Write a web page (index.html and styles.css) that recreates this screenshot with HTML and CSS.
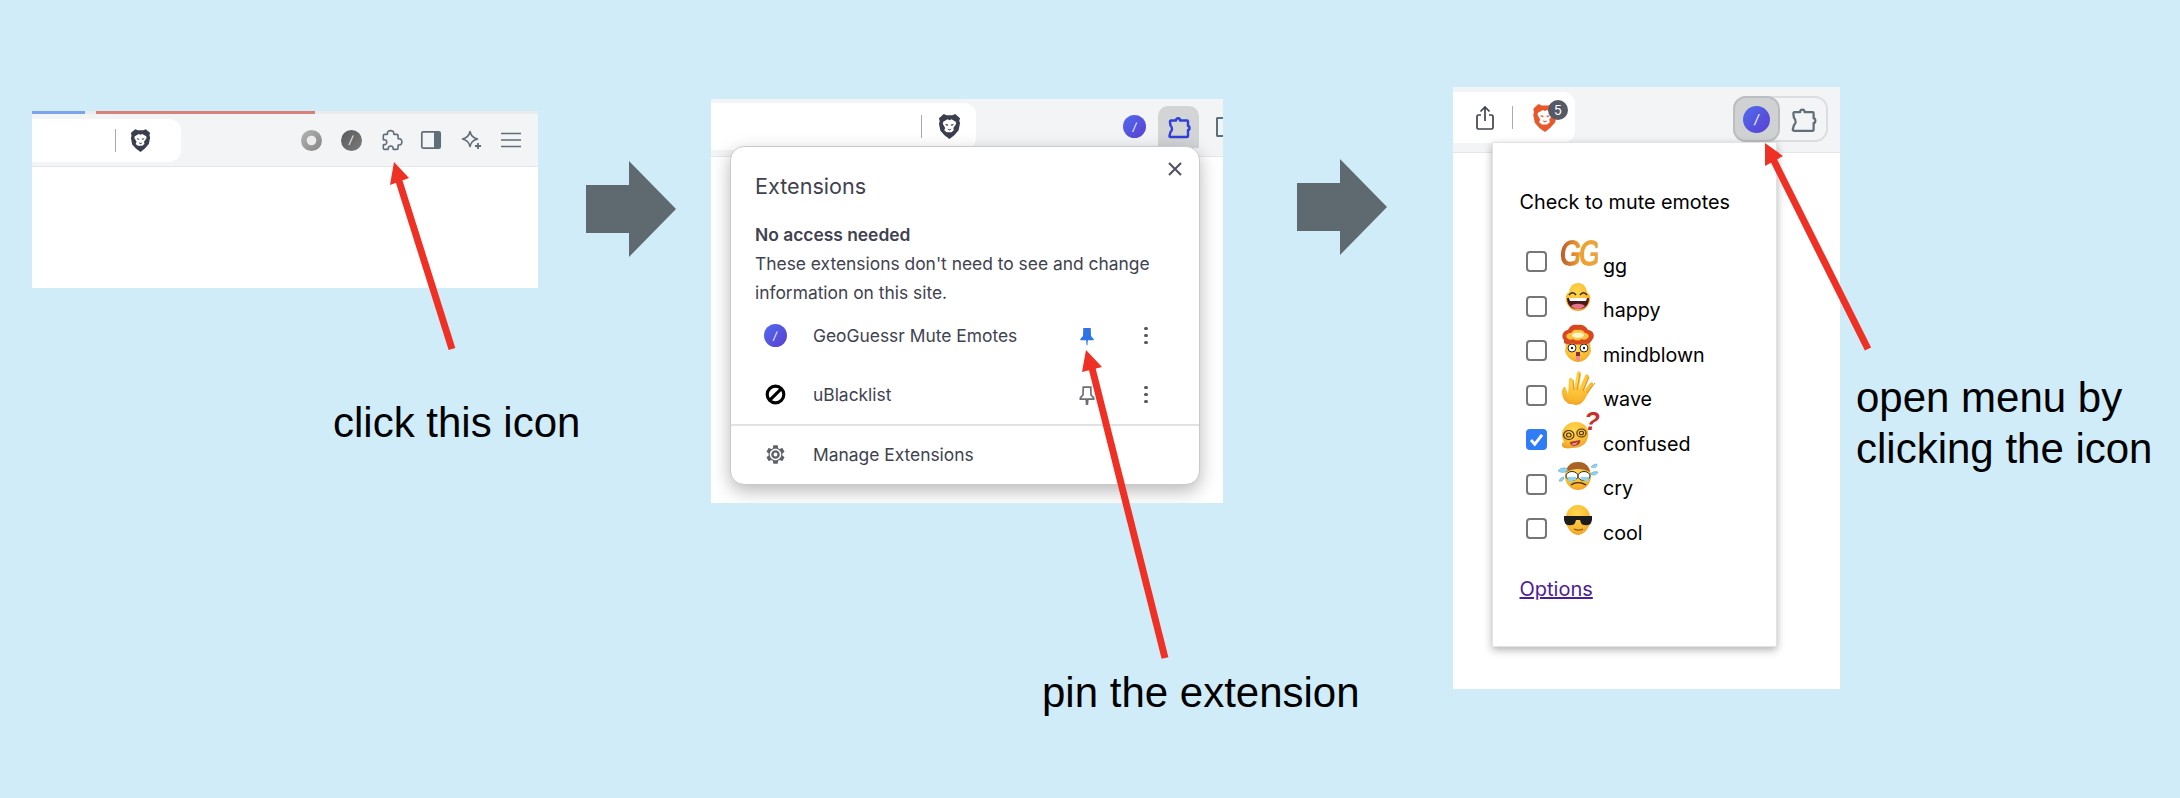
FILE: index.html
```html
<!DOCTYPE html>
<html lang="en">
<head>
<meta charset="utf-8">
<title>Pin the extension</title>
<link rel="stylesheet" href="styles.css">
</head>
<body>
<svg class="defs" width="0" height="0" aria-hidden="true">
  <defs>
    <linearGradient id="grey" x1="0" y1="0" x2="1" y2="1"><stop offset="0" stop-color="#b4b4b4"/><stop offset="1" stop-color="#858585"/></linearGradient>
    <radialGradient id="skin" cx=".45" cy=".3" r=".8"><stop offset="0" stop-color="#ffd84f"/><stop offset=".7" stop-color="#f9b52c"/><stop offset="1" stop-color="#e8962a"/></radialGradient>
    <symbol id="lion" viewBox="0 0 24 28">
      <path class="lion-shield" d="M6 1l3 1.300h6L18 1l3.500 3 1.500 1.500-.8 2.500.8 2.500-1.500 7.500-4.500 5L12 27l-5-3.500-4.500-5L1 11l.8-2.500L1 5.500 2.500 4z"/>
      <path class="lion-face" d="M5.500 9l4.500-2.500 2 1 2-1L18.500 9l.5 2-3 4.500.5 2.500-2.500 2h-5L6.500 18l1-2.500L5 11z"/>
      <path class="lion-shield" d="M7.500 11.500l3 .5v1.200l-2-.3zM16.500 11.500l-3 .5v1.200l2-.3zM10 16l2 1 2-1-.7 1.500-1.300.7-1.300-.7z"/>
    </symbol>
    <symbol id="puzzle" viewBox="0 0 24 24">
      <path d="M8.500 5.500c-.8-3.800 7-3.800 6.200 0-.1.600 0 .9.600.9h2.400c.9 0 1.400.5 1.400 1.400v2.400c0 .6.300.7.900.6 3.800-.8 3.800 7 0 6.200-.6-.1-.9 0-.9.600v2.400c0 .9-.5 1.400-1.400 1.400h-3c-.6 0-.7-.3-.6-.9.500-3.400-5.300-3.400-4.800 0 .1.600 0 .9-.6.900H5.700c-.9 0-1.400-.5-1.400-1.400v-2.800c0-.6.300-.7.900-.6 3.400.5 3.400-5.300 0-4.800-.6.100-.9 0-.9-.6V7.800c0-.9.500-1.400 1.400-1.400h2.200c.6 0 .7-.3.600-.9z"/>
    </symbol>
    <symbol id="puzzle-pin" viewBox="0 0 24 24">
      <path stroke-linejoin="round" d="M4 5.500H9C9 2.500 13 2.500 13 5.500H20c.6 0 1 .4 1 1V11C23 11 23 15 21 15V21c0 .6-.4 1-1 1H3.500c-.8 0-1.200-.5-1-1.200L3.500 17C5.500 15.500 5.500 12.500 3.500 10.500L3 7c-.1-.8.300-1.500 1-1.500z"/>
    </symbol>
    <symbol id="pin" viewBox="0 0 24 24">
      <path d="M7.500 2.500h9l.3 9.500 3.200 3.500v1.500H13l-.5 6h-1L11 17H4v-1.500L7.200 12z"/>
    </symbol>
    <symbol id="gear" viewBox="0 0 24 24">
      <path fill-rule="evenodd" d="M19.140 12.940c.04-.3.06-.61.06-.94 0-.32-.02-.64-.07-.94l2.030-1.580c.18-.14.23-.41.12-.61l-1.920-3.320c-.12-.22-.37-.29-.59-.22l-2.390.96c-.5-.38-1.030-.7-1.620-.94l-.36-2.540c-.04-.24-.24-.41-.48-.41h-3.840c-.24 0-.43.17-.47.41l-.36 2.540c-.59.24-1.130.57-1.620.94l-2.390-.96c-.22-.08-.47 0-.59.22L2.740 8.870c-.12.21-.08.47.12.61l2.030 1.580c-.05.3-.09.63-.09.94s.02.64.07.94l-2.030 1.580c-.18.14-.23.41-.12.61l1.920 3.320c.12.22.37.29.59.22l2.390-.96c.5.38 1.030.7 1.620.94l.36 2.540c.05.24.24.41.48.41h3.840c.24 0 .44-.17.47-.41l.36-2.540c.59-.24 1.130-.56 1.620-.94l2.390.96c.22.08.47 0 .59-.22l1.920-3.320c.12-.22.07-.47-.12-.61l-2.010-1.580zM12 18c-3.300 0-6-2.700-6-6s2.700-6 6-6 6 2.700 6 6-2.700 6-6 6z"/>
      <path fill-rule="evenodd" d="M12 7.500a4.500 4.500 0 1 0 0 9 4.500 4.500 0 0 0 0-9zm0 2.500a2 2 0 1 1 0 4 2 2 0 0 1 0-4z"/>
    </symbol>
    <symbol id="happy" viewBox="0 0 40 40">
      <path fill="url(#skin)" d="M20 5c6 0 8 4 9 9 3 2 4 5 3 9-2 7-7 10-12 10S10 30 8 23c-1-4 0-7 3-9 1-5 3-9 9-9z"/>
      <path d="M11 17c2-3 5-3 7 0M22 17c2-3 5-3 7 0" fill="none" stroke="#3a2a1a" stroke-width="1.400"/>
      <path fill="#4a1a1a" d="M9 20h22c0 8-5 11-11 11S9 28 9 20z"/>
      <path fill="#fff" d="M11 20h18l-1 3H12z"/>
      <path fill="#e8728a" d="M13 28c3-3 11-3 14 0-2 2-4 3-7 3s-5-1-7-3z"/>
    </symbol>
    <symbol id="mindblown" viewBox="0 0 40 40">
      <path fill="url(#skin)" d="M8 20h24l1 8c-2 7-8 11-13 11S9 35 7 28z"/>
      <path fill="#d8471f" d="M6 17C2 13 6 7 10 7c2-5 6-6 10-5 4-1 8 1 10 5 5 0 8 6 4 10-2 4-6 5-8 3-3 2-9 2-12 0-3 2-6 1-8 0z"/>
      <path fill="#f9c23c" d="M9 15c-2-3 1-5 4-5 2-3 4-4 7-3 3-1 6 1 7 3 3 0 5 3 3 5-2 2-5 2-6 1-3 2-6 2-9 0-2 1-4 1-6-1z"/>
      <path fill="#fff4c8" d="M14 12c1-2 4-3 6-2 3-1 5 0 6 2 0 2-3 3-6 3s-6-1-6-3z"/>
      <circle cx="14" cy="25" r="4" fill="#fff" stroke="#2a2a2a"/><circle cx="26" cy="25" r="4" fill="#fff" stroke="#2a2a2a"/>
      <circle cx="14" cy="25" r="1.200" fill="#222"/><circle cx="26" cy="25" r="1.200" fill="#222"/>
      <path fill="#8a2f3a" d="M18 29h4v4h-4z"/><path fill="#f08a9a" d="M18 33h4v3c0 2-4 2-4 0z"/>
    </symbol>
    <symbol id="wave" viewBox="0 0 40 40">
      <path fill="url(#skin)" d="M11 37C6 34 4 30 4 24l1-3c1-2 3-1 3 1l2 5 1-14c0-3 3-3 4 0l1 9 3-16c1-3 4-2 4 1l-2 15 6-13c1-3 4-2 4 1l-5 14 6-8c2-2 4 0 3 2l-7 12c-3 6-8 10-14 7z"/>
      <path fill="none" stroke="#e08d1c" stroke-width="1" d="M15 13l1 10M22 7l-3 16M31 10l-6 14M37 16l-8 10"/>
    </symbol>
    <symbol id="confused" viewBox="0 0 40 40">
      <g transform="translate(-3 5) scale(1.150 1)">
        <path fill="url(#skin)" d="M18 5c7 0 11 5 11 12 0 3-1 6-2 8-3 5-8 6-13 6-4 1-8 0-8-3 0-2 1-3 2-3-1-2-2-4-2-7 0-7 5-13 12-13z"/>
        <g fill="none" stroke="#4a3318" stroke-width="1">
          <circle cx="12" cy="18" r="4.500"/><circle cx="12" cy="18" r="2"/>
          <circle cx="23" cy="16" r="4"/><circle cx="23" cy="16" r="1.800"/>
        </g>
        <path fill="#a53a3a" d="M13 25l9-2c0 4-2 5-5 6-2 0-4-1-4-4z"/><path fill="#f08fa0" d="M14 27l6-2c-1 2-2 3-3 3s-2 0-3-1z"/>
      </g>
    </symbol>
    <symbol id="cry" viewBox="0 0 40 40">
      <path fill="url(#skin)" d="M20 6c8 0 13 6 13 14s-6 14-13 14S7 28 7 20 12 6 20 6z"/>
      <path fill="#a9622a" d="M8 16C9 9 14 6 20 6s11 3 12 10c-7-4-17-4-24 0z"/>
      <ellipse cx="14" cy="20" rx="6" ry="4.500" fill="#fff" stroke="#2a2a2a"/><ellipse cx="26" cy="20" rx="6" ry="4.500" fill="#fff" stroke="#2a2a2a"/>
      <path fill="#8fd3ee" d="M9 21h9v3l-7 2zM22 21h9l-1 5-6-2z"/>
      <path d="M13 29c4-3 10-3 15 0" fill="none" stroke="#3a2a1a" stroke-width="1.400"/>
      <path fill="#8fd3ee" stroke="#4f9fc9" stroke-width=".5" d="M0 15c3-4 8-4 10-1-2 3-7 3-10 1zM1 25c1-3 3-4 5-4 0 3-2 5-5 4zM33 11c1-2 4-3 6-3 0 3-2 5-6 3zM32 18c2-2 5-3 8-2-1 3-5 4-8 2z"/>
    </symbol>
    <symbol id="cool" viewBox="0 0 40 40">
      <path fill="url(#skin)" d="M20 4c7 0 11 5 12 11 1 4 0 8-1 10-2 5-7 9-11 9s-9-4-11-9c-1-2-2-6-1-10C9 9 13 4 20 4z"/>
      <path fill="#1c1c1c" d="M6 15h28v4l-1 3c-1 3-9 3-10 0l-1-3h-4l-1 3c-1 3-9 3-10 0l-1-3z"/>
      <path d="M16 28c3 1.500 6 1.500 9 0" fill="none" stroke="#8a5a1c" stroke-width="1.200"/>
    </symbol>
  </defs>
</svg>

<main class="canvas">

  <section class="shot shot-one">
    <div class="tabs">
      <span class="tab-line tab-blue"></span>
      <span class="tab-line tab-red"></span>
    </div>
    <div class="toolbar toolbar-one">
      <div class="address address-one">
        <span class="divider"></span>
        <svg class="lion lion-dark"><use href="#lion"/></svg>
      </div>
      <div class="actions">
        <span class="action"><svg class="icon-21" viewBox="0 0 24 24"><circle cx="12" cy="12" r="12" fill="url(#grey)"/><circle cx="12" cy="12" r="5.500" fill="#ececec"/></svg></span>
        <span class="action"><span class="ext-dot ext-dot-grey">/</span></span>
        <span class="action"><svg class="icon-24 stroke-slate"><use href="#puzzle"/></svg></span>
        <span class="action">
          <svg class="icon-24" viewBox="0 0 24 24"><rect x="2.800" y="3.800" width="18.400" height="16.400" rx="1.500" fill="none" stroke="#5f6e78" stroke-width="1.700"/><rect x="15" y="3.800" width="6.200" height="16.400" fill="#5f6e78"/></svg>
        </span>
        <span class="action">
          <svg class="icon-24" viewBox="0 0 24 24"><path d="M11 3.500c1 4.500 3 6.500 7.500 7.500-4.500 1-6.500 3-7.500 7.500-1-4.500-3-6.500-7.500-7.500C8 10 10 8 11 3.500z" fill="none" stroke="#5f6e78" stroke-width="1.600" stroke-linejoin="round"/><path d="M19 15v6M16 18h6" stroke="#5f6e78" stroke-width="1.800"/></svg>
        </span>
        <span class="action">
          <svg class="icon-24" viewBox="0 0 24 24"><path d="M2 5.500h20M2 12h20M2 18.500h20" stroke="#5f6e78" stroke-width="1.500"/></svg>
        </span>
      </div>
    </div>
    <div class="page-body"></div>
  </section>

  <section class="shot shot-two">
    <div class="toolbar toolbar-two">
      <div class="address address-two">
        <span class="divider"></span>
        <svg class="lion lion-dark lion-large"><use href="#lion"/></svg>
      </div>
      <span class="ext-dot ext-dot-violet dot-two">/</span>
      <span class="active-tile"><svg class="icon-24 stroke-blue"><use href="#puzzle-pin"/></svg></span>
      <span class="sidebar-sliver"></span>
    </div>
    <div class="page-body"></div>

    <div class="ext-popup">
      <svg class="close" viewBox="0 0 14 14"><path d="M1 1l12 12M13 1L1 13" stroke="#4d505c" stroke-width="2"/></svg>
      <h2 class="ext-title">Extensions</h2>
      <p class="ext-strong">No access needed</p>
      <p class="ext-copy">These extensions don't need to see and change information on this site.</p>
      <div class="ext-row ext-row-first">
        <span class="row-icon"><span class="ext-dot ext-dot-violet">/</span></span>
        <span class="row-name">GeoGuessr Mute Emotes</span>
        <svg class="pin pin-on"><use href="#pin"/></svg>
        <span class="kebab"><i></i><i></i><i></i></span>
      </div>
      <div class="ext-row">
        <span class="row-icon">
          <svg class="icon-21" viewBox="0 0 24 24"><circle cx="12" cy="12" r="9.500" fill="none" stroke="#000" stroke-width="3.600"/><path d="M18.500 5.500l-13 13" stroke="#000" stroke-width="3.600"/></svg>
        </span>
        <span class="row-name">uBlacklist</span>
        <svg class="pin pin-off"><use href="#pin"/></svg>
        <span class="kebab"><i></i><i></i><i></i></span>
      </div>
      <div class="ext-row ext-manage">
        <span class="row-icon"><svg class="gear"><use href="#gear"/></svg></span>
        <span class="row-name">Manage Extensions</span>
      </div>
    </div>
  </section>

  <section class="shot shot-three">
    <div class="toolbar toolbar-three">
      <div class="address address-three">
        <svg class="share" viewBox="0 0 20 26"><path d="M6 10H3.500C2.500 10 2 10.500 2 11.500v11C2 23.500 2.500 24 3.500 24h13c1 0 1.500-.5 1.500-1.500v-11c0-1-.5-1.500-1.500-1.500H14M10 16V2M5.500 6.500L10 2l4.500 4.500" fill="none" stroke="#3f434b" stroke-width="1.700"/></svg>
        <span class="divider"></span>
        <span class="lion-wrap">
          <svg class="lion lion-orange"><use href="#lion"/></svg>
          <span class="badge">5</span>
        </span>
      </div>
      <div class="ext-pill">
        <span class="pill-active"><span class="ext-dot ext-dot-violet dot-big">/</span></span>
        <span class="pill-rest"><svg class="icon-27 stroke-slate-thick"><use href="#puzzle-pin"/></svg></span>
      </div>
    </div>
    <div class="page-body"></div>

    <div class="mute-popup">
      <h2 class="mute-title">Check to mute emotes</h2>
      <ul class="mute-list">
        <li class="mute-row"><span class="check"></span><span class="emote"><span class="gg">GG</span></span><span class="mute-label">gg</span></li>
        <li class="mute-row"><span class="check"></span><span class="emote"><svg class="emote-svg"><use href="#happy"/></svg></span><span class="mute-label">happy</span></li>
        <li class="mute-row"><span class="check"></span><span class="emote"><svg class="emote-svg"><use href="#mindblown"/></svg></span><span class="mute-label">mindblown</span></li>
        <li class="mute-row"><span class="check"></span><span class="emote"><svg class="emote-svg"><use href="#wave"/></svg></span><span class="mute-label">wave</span></li>
        <li class="mute-row"><span class="check check-on"><svg viewBox="0 0 20 20"><path d="M3.500 10.500l4.500 5L16.500 4.500" fill="none" stroke="#fff" stroke-width="3.400"/></svg></span><span class="emote"><svg class="emote-svg"><use href="#confused"/></svg><span class="question">?</span></span><span class="mute-label">confused</span></li>
        <li class="mute-row"><span class="check"></span><span class="emote"><svg class="emote-svg"><use href="#cry"/></svg></span><span class="mute-label">cry</span></li>
        <li class="mute-row"><span class="check"></span><span class="emote"><svg class="emote-svg"><use href="#cool"/></svg></span><span class="mute-label">cool</span></li>
      </ul>
      <a class="options" href="#options">Options</a>
    </div>
  </section>

  <svg class="overlay" viewBox="0 0 2180 798" aria-hidden="true">
    <polygon class="step-arrow" points="586,185 629,185 629,161 676,209 629,257 629,233 586,233"/>
    <polygon class="step-arrow" points="1297,183 1340,183 1340,159 1387,207 1340,255 1340,231 1297,231"/>
    <path class="red-line" d="M399 181L452 349"/>
    <polygon class="red-head" points="394,162 390,185 409,178"/>
    <path class="red-line" d="M1092 368L1165 658"/>
    <polygon class="red-head" points="1086,350 1082,372 1102,367"/>
    <path class="red-line" d="M1773 159L1868 349"/>
    <polygon class="red-head" points="1765,143 1765,166 1783,156"/>
  </svg>

  <p class="note note-click">click this icon</p>
  <p class="note note-pin">pin the extension</p>
  <p class="note note-open">open menu by<br>clicking the icon</p>
</main>
</body>
</html>
```
FILE: styles.css
```css
* { box-sizing: border-box; }
html, body { margin: 0; padding: 0; }
body { background: #d0ecf9; font-family: "Inter", "Liberation Sans", sans-serif; overflow: hidden; }
.defs { position: absolute; }
.canvas { position: relative; width: 2180px; height: 798px; overflow: hidden; }

/* Screenshots placed on the free canvas */
.shot { position: absolute; display: flex; flex-direction: column; background: #fff; overflow: hidden; }
.shot-one { left: 32px; top: 111px; width: 506px; height: 177px; }
.shot-two { left: 711px; top: 99px; width: 512px; height: 404px; }
.shot-three { left: 1453px; top: 87px; width: 387px; height: 602px; }
.page-body { flex: 1; background: #fff; }

.tabs { display: flex; height: 3px; background: #e9ecef; flex: none; }
.tab-line { display: block; height: 3px; }
.tab-blue { width: 53px; background: #7ba4ea; }
.tab-red { width: 219px; margin-left: 11px; background: #d9807a; }

.toolbar { display: flex; flex: none; background: #f3f4f6; border-bottom: 1px solid #e4e6ea; }
.toolbar-one { height: 53px; align-items: center; }
.toolbar-two { height: 58px; padding-top: 4px; align-items: flex-start; }
.toolbar-three { height: 66px; padding-top: 5px; align-items: flex-start; }

.address { display: flex; align-items: center; background: #fff; border-radius: 0 12px 12px 0; flex: none; }
.address-one { width: 149px; height: 43px; justify-content: flex-end; padding-right: 30px; gap: 14px; }
.address-two { width: 265px; height: 47px; justify-content: flex-end; padding-right: 15px; gap: 16px; }
.address-three { width: 122px; height: 51px; padding-left: 22px; gap: 17px; }
.divider { width: 1px; height: 23px; background: #a9abb0; flex: none; }
.share { width: 20px; height: 26px; display: block; flex: none; }
.lion { width: 21px; height: 25px; display: block; }
.lion-large { width: 23px; height: 27px; }
.lion-dark .lion-shield, .lion-dark { fill: #3b3e4e; }
.lion-face { fill: #fff; }
.lion-orange { fill: #e8582a; width: 26px; height: 30px; }
.lion-orange .lion-shield { fill: #e8582a; }
.lion-wrap { position: relative; display: block; margin-left: 2px; }
.badge { position: absolute; left: 16px; top: -3px; width: 20px; height: 20px; border-radius: 50%; background: #555a66; color: #fff; font-size: 13px; line-height: 20px; text-align: center; }

.actions { display: flex; align-items: center; gap: 16px; margin-left: auto; padding-right: 15px; }
.action { display: flex; align-items: center; justify-content: center; width: 24px; height: 24px; }
.icon-21 { width: 21px; height: 21px; display: block; }
.icon-24 { width: 24px; height: 24px; display: block; }
.icon-27 { width: 27px; height: 27px; display: block; }
.stroke-slate { fill: none; stroke: #5f6e78; stroke-width: 1.6; }
.stroke-slate-thick { fill: none; stroke: #5f6e78; stroke-width: 2; }
.stroke-blue { fill: none; stroke: #2f3fd8; stroke-width: 2.4; }

.ext-dot { display: flex; align-items: center; justify-content: center; width: 23px; height: 23px; border-radius: 50%; color: #fff; font-size: 11px; font-style: italic; flex: none; }
.ext-dot-grey { width: 21px; height: 21px; background: linear-gradient(135deg, #5a5a5a, #7b7b7b); }
.ext-dot-violet { background: linear-gradient(135deg, #4f6bef, #5b3fd0); }
.dot-two { margin: 12px 0 0 147px; }
.dot-big { width: 27px; height: 27px; font-size: 13px; }
.active-tile { display: flex; align-items: center; justify-content: center; width: 41px; height: 42px; margin: 3px 0 0 12px; background: #d3d4d6; border-radius: 10px 10px 0 0; flex: none; }
.sidebar-sliver { width: 12px; height: 20px; margin: 14px 0 0 17px; border: 2px solid #5f6e78; border-right: 0; border-radius: 2px 0 0 2px; flex: none; }

/* Extensions popup over the toolbar */
.ext-popup { position: absolute; left: 19px; top: 47px; width: 470px; height: 339px; padding-top: 27px; background: #fff; border: 1px solid #c9cacd; border-radius: 14px; box-shadow: 0 6px 18px rgba(0, 0, 0, .28); color: #3f4250; }
.close { position: absolute; right: 17px; top: 15px; width: 14px; height: 14px; }
.ext-title { margin: 0 0 0 24px; font-size: 21.6px; font-weight: 400; line-height: 24px; }
.ext-strong { margin: 22px 0 0 24px; font-size: 17.4px; font-weight: 600; line-height: 29px; }
.ext-copy { margin: 0 0 0 24px; width: 430px; font-size: 17.4px; line-height: 29px; }
.ext-row { display: flex; align-items: center; height: 59px; padding: 0 41px 0 32px; }
.ext-row-first { margin-top: -1px; }
.ext-manage { height: 58px; border-top: 2px solid #e1e2e7; }
.row-icon { display: flex; align-items: center; justify-content: center; width: 24px; flex: none; }
.row-name { flex: 1; margin-left: 26px; font-size: 17.4px; }
.pin { width: 20px; height: 22px; }
.pin-on { fill: #2f74e4; }
.pin-off { fill: none; stroke: #6b6e76; stroke-width: 2; }
.kebab { display: flex; flex-direction: column; align-items: center; gap: 3.5px; width: 24px; margin-left: 37px; }
.kebab i { display: block; width: 3.5px; height: 3.5px; border-radius: 50%; background: #55585f; }
.gear { width: 23px; height: 23px; fill: #5f6168; }

/* Ext pill */
.ext-pill { display: flex; width: 95px; height: 46px; margin: 4px 0 0 158px; border: 2px solid #dcdde0; border-radius: 13px; flex: none; }
.pill-active { display: flex; align-items: center; justify-content: center; width: 47px; margin: -2px 0 -2px -2px; background: #d0d1d3; border: 2px solid #bcbdc0; border-radius: 13px; }
.pill-rest { display: flex; align-items: center; justify-content: center; flex: 1; }

/* Mute popup */
.mute-popup { position: absolute; left: 39px; top: 55px; width: 285px; height: 505px; padding: 47px 0 0 27px; background: #fff; border: 1px solid #e3e3e3; box-shadow: 0 3px 8px rgba(0, 0, 0, .3); color: #000; }
.mute-title { margin: 0 0 0 -.5px; font-size: 19.8px; font-weight: 400; line-height: 24px; }
.mute-list { list-style: none; margin: 25.5px 0 0; padding: 0 0 0 6px; }
.mute-row { display: flex; align-items: center; height: 44.5px; }
.check { display: flex; width: 21px; height: 21px; flex: none; border: 2px solid #767676; border-radius: 4px; background: #fff; }
.check-on { background: #2f7cf6; border-color: #2f7cf6; padding: 0; }
.check-on svg { width: 17px; height: 17px; display: block; }
.emote { position: relative; display: flex; align-items: center; justify-content: center; width: 40px; height: 40px; margin: -16px 0 0 11px; flex: none; }
.emote-svg { width: 40px; height: 40px; display: block; }
.gg { display: block; transform: scaleX(.78); font-family: "Liberation Sans", sans-serif; font-size: 36px; font-weight: 700; font-style: italic; letter-spacing: -3.5px; line-height: 40px; background: linear-gradient(90deg, #b9562d, #f0a030 55%, #e8a53a); -webkit-background-clip: text; background-clip: text; color: transparent; }
.question { position: absolute; left: 26px; top: -3px; font-family: "Liberation Sans", sans-serif; font-size: 26px; font-weight: 700; font-style: italic; color: #c9302c; line-height: 24px; }
.mute-label { margin: 8px 0 0 5px; font-size: 19.7px; line-height: 24px; }
.options { display: block; margin: 26px 0 0 -.5px; font-size: 20px; line-height: 24px; color: #4c1d95; }

/* Annotations over the canvas */
.overlay { position: absolute; left: 0; top: 0; width: 2180px; height: 798px; pointer-events: none; }
.step-arrow { fill: #5f6a70; }
.red-line { fill: none; stroke: #ee3124; stroke-width: 7; }
.red-head { fill: #ee3124; }
.note { position: absolute; margin: 0; font-family: "Liberation Sans", sans-serif; font-size: 42px; line-height: 51px; color: #000; white-space: nowrap; }
.note-click { left: 333px; top: 397px; }
.note-pin { left: 1042px; top: 667px; }
.note-open { left: 1856px; top: 372px; }
```
